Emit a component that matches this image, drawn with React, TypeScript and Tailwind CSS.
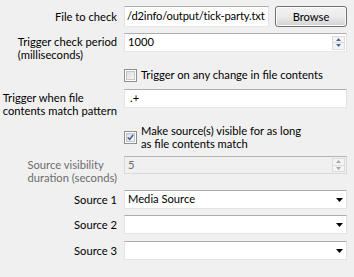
import React from "react";

const field =
  "bg-white border border-[#e2e3ea] border-t-[#abadb3] border-b-[#e3e9ef] flex items-center px-[3px]";

function FormLabel({ lines, disabled, pad = 0 }: { lines: string[]; disabled?: boolean; pad?: number }) {
  return (
    <div className="w-[112px] shrink-0 flex justify-end" style={{ paddingTop: pad }}>
      <div className={`text-left leading-[13px] whitespace-nowrap ${disabled ? "text-[#6d6d6d]" : "text-black"}`}>
        {lines.map((l) => (
          <div key={l}>{l}</div>
        ))}
      </div>
    </div>
  );
}

function SpinArrows({ disabled }: { disabled?: boolean }) {
  const c = disabled ? "#a8a8a8" : "#4e6b98";
  return (
    <div className="w-[13px] h-[14px] flex flex-col border border-[#dcdcdc] bg-[#f4f4f4]">
      <div className="flex-1 flex items-center justify-center border-b border-[#dcdcdc]">
        <svg width="5" height="3" viewBox="0 0 5 3"><path d="M2.5 0L5 3H0z" fill={c} /></svg>
      </div>
      <div className="flex-1 flex items-center justify-center">
        <svg width="5" height="3" viewBox="0 0 5 3"><path d="M0 0H5L2.5 3z" fill={c} /></svg>
      </div>
    </div>
  );
}

function Check({ checked }: { checked?: boolean }) {
  return (
    <div className="w-[13px] h-[13px] shrink-0 border border-[#8e8f8f] bg-white p-[1px]">
      <div className="w-full h-full border border-[#c6c6c6] bg-gradient-to-br from-[#dcdcdc] to-[#f8f8f8] flex items-center justify-center">
        {checked && (
          <svg width="9" height="9" viewBox="0 0 9 9">
            <path d="M1 4.5L3.5 7L8 1" stroke="#3b5aa0" strokeWidth="1.8" fill="none" />
          </svg>
        )}
      </div>
    </div>
  );
}

function Combo({ value }: { value?: string }) {
  return (
    <div className="flex-1 h-[19px] bg-white border border-[#e3e3e3] border-t-[#acacac] flex items-center pl-[3px] pr-[3px]">
      <span className="flex-1">{value}</span>
      <svg width="7" height="4" viewBox="0 0 7 4"><path d="M0 0H7L3.5 4z" fill="#000" /></svg>
    </div>
  );
}

export default function App() {
  return (
    <div className="w-[354px] h-[277px] bg-[#f0f0f0] pl-[5px] pr-[7px] pt-[6px] text-[11.2px] text-black font-['Lato','Liberation_Sans',sans-serif] overflow-hidden">
      <div className="flex items-center h-[21px] gap-[7px]">
        <FormLabel lines={["File to check"]} />
        <div className={`${field} w-[145px] h-[21px] overflow-hidden whitespace-nowrap pl-[2px] tracking-[-0.15px]`}>/d2info/output/tick-party.txt</div>
        <button className="ml-[-1px] w-[72px] h-[21px] rounded-[3px] border border-[#707070] bg-gradient-to-b from-[#f2f2f2] via-[#ebebeb] to-[#d3d3d3] shadow-[inset_0_0_0_1px_#fcfcfc] leading-none">
          Browse
        </button>
      </div>

      <div className="flex items-start gap-[7px] mt-[6px]">
        <FormLabel lines={["Trigger check period", "(milliseconds)"]} pad={2} />
        <div className={`${field} flex-1 h-[19px] justify-between pr-[1px]`}>
          <span>1000</span>
          <SpinArrows />
        </div>
      </div>

      <div className="flex items-center h-[16px] mt-[6px] pl-[119px] gap-[4px] whitespace-nowrap">
        <Check />
        <span>Trigger on any change in file contents</span>
      </div>

      <div className="flex items-start gap-[7px] mt-[6px]">
        <FormLabel lines={["Trigger when file", "contents match pattern"]} pad={2} />
        <div className={`${field} flex-1 h-[19px] pl-[5px]`}>.+</div>
      </div>

      <div className="flex items-center mt-[7px] pl-[119px] gap-[4px] whitespace-nowrap">
        <Check checked />
        <div className="leading-[13px]">
          <div>Make source(s) visible for as long</div>
          <div>as file contents match</div>
        </div>
      </div>

      <div className="flex items-start gap-[7px] mt-[6px]">
        <FormLabel lines={["Source visibility", "duration (seconds)"]} pad={2} disabled />
        <div className="flex-1 h-[18px] bg-[#f0f0f0] border border-[#d9d9d9] border-t-[#b5b5b5] flex items-center justify-between pl-[3px] pr-[1px] text-[#6d6d6d]">
          <span>5</span>
          <SpinArrows disabled />
        </div>
      </div>

      {["Media Source", "", ""].map((v, i) => (
        <div key={i} className={`flex items-center h-[19px] gap-[7px] ${i === 2 ? "mt-[7px]" : "mt-[6px]"}`}>
          <FormLabel lines={[`Source ${i + 1}`]} />
          <Combo value={v} />
        </div>
      ))}
    </div>
  );
}
